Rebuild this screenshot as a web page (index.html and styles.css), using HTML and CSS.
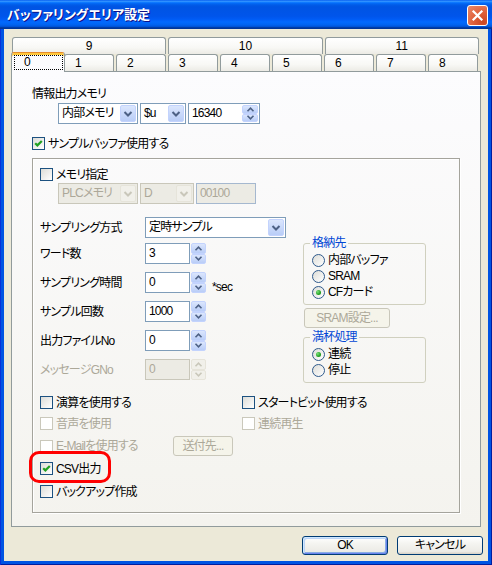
FILE: index.html
```html
<!DOCTYPE html>
<html lang="ja">
<head>
  <meta charset="UTF-8">
  <title>バッファリングエリア設定</title>
  <link rel="stylesheet" href="styles.css">
</head>
<body>
<div class="window">
  <div class="titlebar">
    <span class="title">バッファリングエリア設定</span>
    <span class="close">
      <svg width="21" height="21" viewBox="0 0 21 21"><path d="M6.5 6.5 L14.5 14.5 M14.5 6.5 L6.5 14.5" stroke="#fff" stroke-width="2.2" stroke-linecap="square"/></svg>
    </span>
  </div>

  <div class="client">
    <div class="tabs">
      <div class="tab-row upper">
        <div class="tab">9</div>
        <div class="tab">10</div>
        <div class="tab">11</div>
      </div>
      <div class="tab-row lower">
        <div class="tab active"><span class="focus">0</span></div>
        <div class="tab">1</div>
        <div class="tab">2</div>
        <div class="tab">3</div>
        <div class="tab">4</div>
        <div class="tab">5</div>
        <div class="tab">6</div>
        <div class="tab">7</div>
        <div class="tab">8</div>
      </div>
    </div>

    <div class="page">
      <div class="caption">情報出力メモリ</div>
      <div class="mem-row">
        <div class="combo mem">
          <span class="value">内部メモリ</span>
          <span class="drop"><svg width="14" height="15" viewBox="0 0 14 15"><path d="M3.5 6 L7 9.5 L10.5 6" fill="none" stroke="#4D6185" stroke-width="2"/></svg></span>
        </div>
        <div class="combo reg">
          <span class="value">$u</span>
          <span class="drop"><svg width="14" height="15" viewBox="0 0 14 15"><path d="M3.5 6 L7 9.5 L10.5 6" fill="none" stroke="#4D6185" stroke-width="2"/></svg></span>
        </div>
        <div class="combo addr">
          <span class="value">16340</span>
          <span class="spin inner">
            <span class="arrow"><svg width="9" height="5" viewBox="0 0 9 5"><path d="M1.5 4.2 L4.5 1.2 L7.5 4.2" fill="none" stroke="#4D6185" stroke-width="1.6"/></svg></span>
            <span class="arrow"><svg width="9" height="5" viewBox="0 0 9 5"><path d="M1.5 0.8 L4.5 3.8 L7.5 0.8" fill="none" stroke="#4D6185" stroke-width="1.6"/></svg></span>
          </span>
        </div>
      </div>
      <div class="check buffer">
        <span class="box"><svg width="11" height="11" viewBox="0 0 11 11"><path d="M2.2 5.2 L4.4 7.4 L8.8 3" fill="none" stroke="#21A121" stroke-width="2.2"/></svg></span>
        <span>サンプルバッファ使用する</span>
      </div>

      <div class="frame">
        <div class="check"><span class="box"></span><span>メモリ指定</span></div>
        <div class="mem-row plc-row">
          <div class="combo plc off">
            <span class="value">PLCメモリ</span>
            <span class="drop"><svg width="14" height="15" viewBox="0 0 14 15"><path d="M3.5 6 L7 9.5 L10.5 6" fill="none" stroke="#C9C7BA" stroke-width="2"/></svg></span>
          </div>
          <div class="combo dev off">
            <span class="value">D</span>
            <span class="drop"><svg width="14" height="15" viewBox="0 0 14 15"><path d="M3.5 6 L7 9.5 L10.5 6" fill="none" stroke="#C9C7BA" stroke-width="2"/></svg></span>
          </div>
          <div class="edit num off blue">00100</div>
        </div>

        <div class="field method-row">
          <span class="field-label">サンプリング方式</span>
          <div class="combo method">
            <span class="value">定時サンプル</span>
            <span class="drop"><svg width="14" height="15" viewBox="0 0 14 15"><path d="M3.5 6 L7 9.5 L10.5 6" fill="none" stroke="#4D6185" stroke-width="2"/></svg></span>
          </div>
        </div>

        <div class="settings">
          <div class="fields">
            <div class="field">
              <span class="field-label">ワード数</span>
              <span class="edit short">3</span>
              <span class="spin alone">
                <span class="arrow"><svg width="9" height="5" viewBox="0 0 9 5"><path d="M1.5 4.2 L4.5 1.2 L7.5 4.2" fill="none" stroke="#4D6185" stroke-width="1.6"/></svg></span>
                <span class="arrow"><svg width="9" height="5" viewBox="0 0 9 5"><path d="M1.5 0.8 L4.5 3.8 L7.5 0.8" fill="none" stroke="#4D6185" stroke-width="1.6"/></svg></span>
              </span>
            </div>
            <div class="field">
              <span class="field-label">サンプリング時間</span>
              <span class="edit short">0</span>
              <span class="spin alone">
                <span class="arrow"><svg width="9" height="5" viewBox="0 0 9 5"><path d="M1.5 4.2 L4.5 1.2 L7.5 4.2" fill="none" stroke="#4D6185" stroke-width="1.6"/></svg></span>
                <span class="arrow"><svg width="9" height="5" viewBox="0 0 9 5"><path d="M1.5 0.8 L4.5 3.8 L7.5 0.8" fill="none" stroke="#4D6185" stroke-width="1.6"/></svg></span>
              </span>
              <span class="unit">*sec</span>
            </div>
            <div class="field">
              <span class="field-label">サンプル回数</span>
              <span class="edit short">1000</span>
              <span class="spin alone">
                <span class="arrow"><svg width="9" height="5" viewBox="0 0 9 5"><path d="M1.5 4.2 L4.5 1.2 L7.5 4.2" fill="none" stroke="#4D6185" stroke-width="1.6"/></svg></span>
                <span class="arrow"><svg width="9" height="5" viewBox="0 0 9 5"><path d="M1.5 0.8 L4.5 3.8 L7.5 0.8" fill="none" stroke="#4D6185" stroke-width="1.6"/></svg></span>
              </span>
            </div>
            <div class="field">
              <span class="field-label">出力ファイルNo</span>
              <span class="edit short">0</span>
              <span class="spin alone">
                <span class="arrow"><svg width="9" height="5" viewBox="0 0 9 5"><path d="M1.5 4.2 L4.5 1.2 L7.5 4.2" fill="none" stroke="#4D6185" stroke-width="1.6"/></svg></span>
                <span class="arrow"><svg width="9" height="5" viewBox="0 0 9 5"><path d="M1.5 0.8 L4.5 3.8 L7.5 0.8" fill="none" stroke="#4D6185" stroke-width="1.6"/></svg></span>
              </span>
            </div>
            <div class="field disabled">
              <span class="field-label">メッセージGNo</span>
              <span class="edit short off">0</span>
              <span class="spin alone off">
                <span class="arrow"><svg width="9" height="5" viewBox="0 0 9 5"><path d="M1.5 4.2 L4.5 1.2 L7.5 4.2" fill="none" stroke="#C9C7BA" stroke-width="1.6"/></svg></span>
                <span class="arrow"><svg width="9" height="5" viewBox="0 0 9 5"><path d="M1.5 0.8 L4.5 3.8 L7.5 0.8" fill="none" stroke="#C9C7BA" stroke-width="1.6"/></svg></span>
              </span>
            </div>
          </div>

          <div class="groups">
            <fieldset class="group">
              <legend>格納先</legend>
              <div class="radio"><span class="dot"></span><span>内部バッファ</span></div>
              <div class="radio"><span class="dot"></span><span>SRAM</span></div>
              <div class="radio"><span class="dot on"></span><span>CFカード</span></div>
            </fieldset>
            <div class="button off sram">SRAM設定...</div>
            <fieldset class="group">
              <legend>満杯処理</legend>
              <div class="radio"><span class="dot on"></span><span>連続</span></div>
              <div class="radio"><span class="dot"></span><span>停止</span></div>
            </fieldset>
          </div>
        </div>

        <div class="options">
          <div class="opt-row">
            <div class="check first"><span class="box"></span><span>演算を使用する</span></div>
            <div class="check"><span class="box"></span><span>スタートビット使用する</span></div>
          </div>
          <div class="opt-row">
            <div class="check first disabled"><span class="box"></span><span>音声を使用</span></div>
            <div class="check disabled"><span class="box"></span><span>連続再生</span></div>
          </div>
          <div class="opt-row mail-row">
            <div class="check mail disabled"><span class="box"></span><span>E-Mailを使用する</span></div>
            <div class="button off send">送付先...</div>
          </div>
          <div class="opt-row csv-row">
            <div class="check csv">
              <span class="box"><svg width="11" height="11" viewBox="0 0 11 11"><path d="M2.2 5.2 L4.4 7.4 L8.8 3" fill="none" stroke="#21A121" stroke-width="2.2"/></svg></span>
              <span>CSV出力</span>
              <span class="mark"></span>
            </div>
          </div>
          <div class="opt-row backup-row">
            <div class="check"><span class="box"></span><span>バックアップ作成</span></div>
          </div>
        </div>
      </div>
    </div>

    <div class="buttons">
      <div class="button default">OK</div>
      <div class="button">キャンセル</div>
    </div>
  </div>
</div>
</body>
</html>
```

FILE: styles.css
```css
* {
  box-sizing: border-box;
}

body {
  margin: 0;
  font-family: "Liberation Sans", "Noto Sans CJK JP", sans-serif;
  font-size: 12px;
  font-feature-settings: "palt";
  letter-spacing: -0.8px;
  color: #000;
  background: #fff;
}

.window {
  width: 492px;
  height: 565px;
  display: flex;
  flex-direction: column;
  background: #0054e3;
  box-shadow: inset 1px 0 #0831d9, inset -1px 0 #001ea0, inset 0 -1px #001ea0;
}

/* title bar */
.titlebar {
  height: 29px;
  display: flex;
  align-items: center;
  justify-content: space-between;
  padding: 0 4px 0 7px;
  background: linear-gradient(to bottom, #0058ee 0%, #3593ff 4%, #288eff 6%, #127dff 8%, #036ffc 10%, #0262ee 14%, #0057e5 20%, #0054e3 24%, #0055eb 56%, #005bf5 66%, #026afe 76%, #0062ef 86%, #0052d6 92%, #0040ab 94%, #003092 100%);
}

.title {
  color: #fff;
  font-weight: bold;
  font-size: 13px;
  line-height: 15px;
  letter-spacing: 0;
  text-shadow: 1px 1px #0f1089;
}

.close {
  width: 21px;
  height: 21px;
  margin-top: 1px;
  border: 1px solid #fff;
  border-radius: 3px;
  background: radial-gradient(circle at 80% 85%, #cc4622 0%, #e0603a 45%, #e88a6c 100%);
  display: flex;
  align-items: center;
  justify-content: center;
}

.close svg {
  margin: -1px;
}

.client {
  flex: 1;
  margin: 0 4px 4px;
  padding: 8px 7px 0;
  background: #ece9d8;
}

/* tabs */
.tabs {
  margin: 0 2px 0 1px;
  letter-spacing: 0;
}

.tab-row {
  display: flex;
  align-items: flex-end;
  gap: 2px;
  height: 17px;
}

.tab {
  height: 17px;
  border: 1px solid #919b9c;
  border-bottom: none;
  border-radius: 3px 3px 0 0;
  background: linear-gradient(to bottom, #fff 0%, #f8f8f5 60%, #ecebe5 100%);
  line-height: 16px;
}

.upper .tab {
  flex: 1;
  text-align: center;
}

.lower .tab {
  width: 50px;
  padding-left: 10px;
}

.lower .tab.active {
  position: relative;
  z-index: 1;
  width: 54px;
  height: 20px;
  margin: -2px -3px -1px -1px;
  padding: 2px 1px 0 2px;
  background: #fcfcfe;
  border-top: 1px solid #e68b2c;
  box-shadow: inset 0 2px #ffc83c;
}

.focus {
  display: block;
  height: 15px;
  padding-left: 9px;
  border: 1px dotted #000;
  line-height: 13px;
}

.page {
  height: 456px;
  padding: 15px 20px 0;
  border: 1px solid #919b9c;
  background: linear-gradient(to bottom, #fcfcfe, #f4f3ee);
}

.caption {
  line-height: 14px;
}

/* inputs */
.mem-row {
  display: flex;
  gap: 2px;
  margin-top: 2px;
  padding-left: 26px;
}

.combo,
.edit {
  height: 21px;
  display: flex;
  border: 1px solid #7f9db9;
  background: #fff;
  line-height: 19px;
}

.combo .value,
.edit {
  flex: 1;
  padding-left: 3px;
  white-space: nowrap;
  overflow: hidden;
}

.drop {
  width: 16px;
  height: 17px;
  margin: 1px;
  border: 1px solid #c3d3fd;
  border-radius: 2px;
  background: linear-gradient(to bottom, #dbe6fd, #b9cdf7);
  display: flex;
  align-items: center;
  justify-content: center;
}

.combo.off,
.edit.off {
  border-color: #c9c7ba;
  background: #ecebe4;
  color: #aca899;
}

.edit.off.blue {
  border-color: #a5b8cf;
}

.combo.off .drop {
  border-color: #e6e4da;
  background: #f1f0ea;
}

.mem { width: 80px; }
.reg { width: 46px; }
.addr { width: 72px; }
.plc { width: 80px; }
.dev { width: 54px; }
.num { width: 60px; flex: none; }
.method { width: 141px; }

.spin {
  display: flex;
  flex-direction: column;
}

.spin .arrow {
  flex: 1;
  display: flex;
  align-items: center;
  justify-content: center;
  border: 1px solid #c3d3fd;
  border-radius: 2px;
  background: linear-gradient(to bottom, #dbe6fd, #b9cdf7);
}

.spin.inner {
  width: 16px;
  margin: 1px;
}

.spin.alone {
  width: 15px;
  height: 21px;
  margin-left: 1px;
}

.spin.off .arrow {
  border-color: #e6e4da;
  background: #f1f0ea;
}

.edit.short {
  width: 45px;
  flex: none;
}

/* checkboxes & radios */
.check {
  display: flex;
  align-items: center;
  height: 13px;
  line-height: 14px;
  white-space: nowrap;
}

.check.buffer {
  margin-top: 13px;
}

.box {
  width: 13px;
  height: 13px;
  margin-right: 3px;
  flex: none;
  border: 1px solid #1c5180;
  background: linear-gradient(135deg, #dcdcd7, #fff);
  display: flex;
  align-items: center;
  justify-content: center;
}

.check.disabled {
  color: #aca899;
}

.check.disabled .box {
  border-color: #cac8bb;
  background: #fff;
}

.radio {
  display: flex;
  align-items: center;
  height: 16px;
  line-height: 14px;
}

.dot {
  width: 13px;
  height: 13px;
  margin-right: 3px;
  border: 1px solid #2f5a8c;
  border-radius: 50%;
  background: linear-gradient(135deg, #dcdcd7, #fff);
  display: flex;
  align-items: center;
  justify-content: center;
}

.dot.on::after {
  content: "";
  width: 5px;
  height: 5px;
  border-radius: 50%;
  background: radial-gradient(circle at 35% 35%, #7be07a, #21a121 60%, #107a10);
}

/* frame */
.frame {
  height: 355px;
  margin-top: 8px;
  padding: 9px 7px 0;
  border: 1px solid #a5a49c;
  box-shadow: 1px 1px 0 #fff, inset 1px 1px 0 #fff;
}

.plc-row {
  padding-left: 18px;
}

.field {
  display: flex;
  align-items: center;
  height: 21px;
}

.field-label {
  width: 105px;
  flex: none;
  line-height: 14px;
}

.field.disabled .field-label {
  color: #aca899;
}

.method-row {
  margin-top: 13px;
}

.unit {
  align-self: flex-end;
  margin: 0 0 -1px 6px;
  line-height: 14px;
}

.settings {
  display: flex;
}

.fields {
  width: 263px;
  padding-top: 5px;
  display: flex;
  flex-direction: column;
  gap: 8px;
}

.groups {
  width: 123px;
  margin-top: -1px;
}

.group {
  margin: 0;
  padding: 2px 6px 4px 8px;
  border: 1px solid #d0d0bf;
  border-radius: 3px;
}

.group legend {
  padding: 0 2px;
  margin-left: -2px;
  color: #0046d5;
  line-height: 13px;
}

/* buttons */
.button {
  height: 19px;
  border: 1px solid #003c74;
  border-radius: 3px;
  background: linear-gradient(to bottom, #fff 0%, #f4f4f0 40%, #ecebe6 85%, #d6d0c5 100%);
  text-align: center;
  line-height: 17px;
}

.button.off {
  height: 20px;
  border-color: #c9c7ba;
  background: #f5f4ea;
  color: #aca899;
  line-height: 18px;
}

.sram {
  width: 86px;
  margin: 3px 0 3px 1px;
}

.send {
  width: 60px;
}

.buttons {
  display: flex;
  justify-content: flex-end;
  gap: 9px;
  margin: 9px -2px 0 0;
}

.buttons .button {
  width: 86px;
}

.button.default {
  box-shadow: inset 1px 1px #cee7ff, inset -1px -1px #6982ee, inset 2px 2px #bcd4f6, inset -2px -2px #89ade4;
}

/* bottom options */
.options {
  margin-top: 13px;
}

.opt-row {
  display: flex;
  align-items: center;
  margin-top: 8px;
}

.opt-row:first-child {
  margin-top: 0;
}

.check.first {
  width: 202px;
}

.check.mail {
  width: 133px;
}

.mail-row {
  height: 20px;
  margin-top: 6px;
}

.csv-row {
  margin-top: 6px;
}

.backup-row {
  margin-top: 10px;
}

.check.csv {
  position: relative;
}

.mark {
  position: absolute;
  left: -11px;
  top: -11px;
  width: 82px;
  height: 32px;
  border: 3px solid #ff0000;
  border-radius: 10px;
}
```
